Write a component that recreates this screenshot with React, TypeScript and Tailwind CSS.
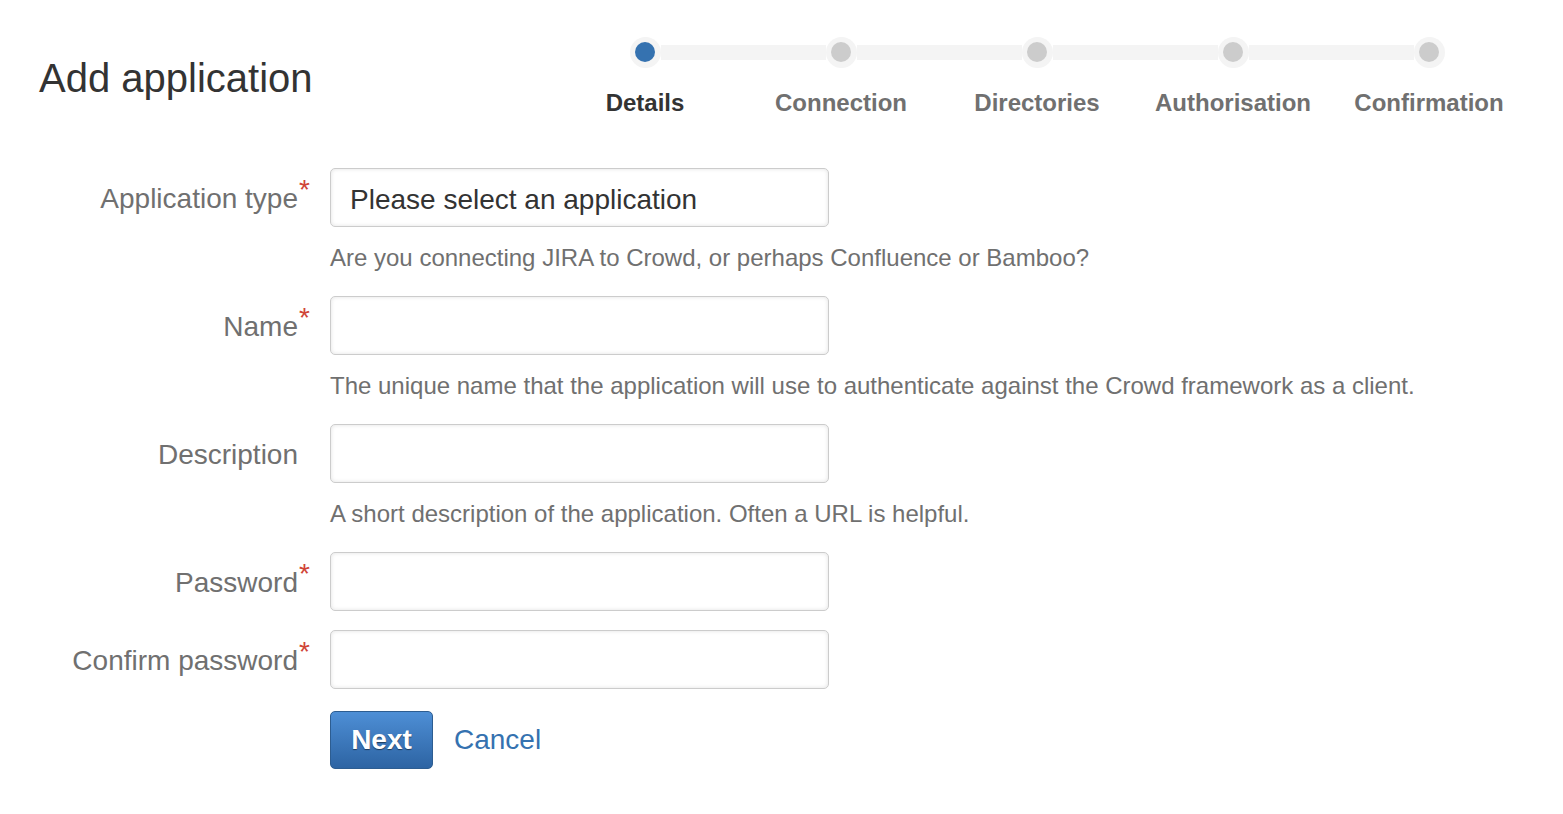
import React from "react";

const steps = ["Details", "Connection", "Directories", "Authorisation", "Confirmation"];

function Step({ label, index }: { label: string; index: number }) {
  const active = index === 0;
  const first = index === 0;
  const last = index === steps.length - 1;
  return (
    <div className="flex w-[196px] flex-col items-center">
      <div className="flex h-[30px] w-full items-center">
        <div className={first ? "h-[15px] flex-1" : "h-[15px] flex-1 bg-[#f4f4f4]"} />
        <div className="flex h-[31px] w-[31px] items-center justify-center rounded-full bg-[#f4f4f4]">
          <div className={active ? "h-[20px] w-[20px] rounded-full bg-[#3572b0]" : "h-[20px] w-[20px] rounded-full bg-[#cccccc]"} />
        </div>
        <div className={last ? "h-[15px] flex-1" : "h-[15px] flex-1 bg-[#f4f4f4]"} />
      </div>
      <div
        className={
          active
            ? "mt-[22px] text-[24px] font-bold leading-[28px] text-[#333333]"
            : "mt-[22px] text-[24px] font-bold leading-[28px] text-[#707070]"
        }
      >
        {label}
      </div>
    </div>
  );
}

function Label({ text, required }: { text: string; required?: boolean }) {
  return (
    <div className="flex h-[59px] w-[298px] shrink-0 items-center justify-end pt-[2px]">
      <span className="relative text-[28px] leading-[32px] text-[#707070]">
        {text}
        {required && (
          <span className="absolute left-full top-[-9px] ml-[1px] text-[28px] leading-[32px] text-[#d04437]">*</span>
        )}
      </span>
    </div>
  );
}

function Field({
  label,
  required,
  help,
  placeholder,
}: {
  label: string;
  required?: boolean;
  help?: string;
  placeholder?: string;
}) {
  return (
    <div className="flex items-start gap-[32px]">
      <Label text={label} required={required} />
      <div className="flex flex-col">
        <div className="flex h-[59px] w-[499px] items-center rounded-[5px] border border-[#cccccc] bg-white px-[19px] pt-[4px] shadow-[inset_0_0_4px_rgba(0,0,0,0.12)]">
          {placeholder && <span className="text-[28px] leading-[32px] text-[#333333]">{placeholder}</span>}
        </div>
        {help && (
          <div className="mb-[4px] mt-[16px] whitespace-nowrap text-[24px] leading-[30px] text-[#707070]">{help}</div>
        )}
      </div>
    </div>
  );
}

export default function App() {
  return (
    <div
      className="min-h-[814px] w-full bg-white pt-[37px]"
      style={{ fontFamily: '"Liberation Sans", Arial, sans-serif' }}
    >
      <div className="flex items-start pl-[39px] pr-[36px]">
        <h1 className="mt-[17px] text-[40px] font-normal leading-[48px] text-[#333333]">Add application</h1>
        <div className="ml-auto flex">
          {steps.map((s, i) => (
            <Step key={s} label={s} index={i} />
          ))}
        </div>
      </div>

      <div className="mt-[51px] flex flex-col gap-[19px]">
        <Field
          label="Application type"
          required
          placeholder="Please select an application"
          help="Are you connecting JIRA to Crowd, or perhaps Confluence or Bamboo?"
        />
        <Field
          label="Name"
          required
          help="The unique name that the application will use to authenticate against the Crowd framework as a client."
        />
        <Field label="Description" help="A short description of the application. Often a URL is helpful." />
        <Field label="Password" required />
        <Field label="Confirm password" required />
      </div>

      <div className="mt-[22px] flex items-center pl-[330px]">
        <button className="h-[58px] w-[103px] rounded-[5px] border border-[#2d5d91] bg-gradient-to-b from-[#4e8fd6] to-[#2d64a3] text-[28px] font-bold leading-[32px] text-white [text-shadow:0_1px_1px_rgba(0,0,0,0.5)]">
          Next
        </button>
        <a className="ml-[21px] text-[28px] leading-[32px] text-[#3572b0]" href="#">
          Cancel
        </a>
      </div>
    </div>
  );
}
